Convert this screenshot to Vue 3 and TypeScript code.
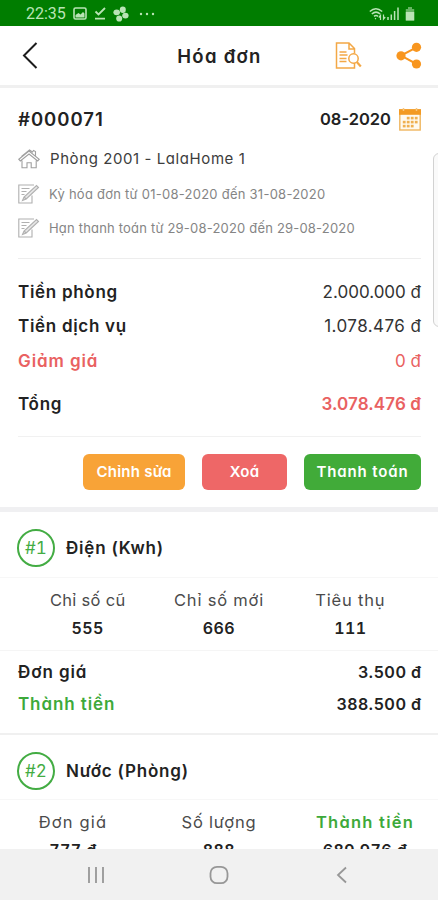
<script setup lang="ts">
interface Line { label: string; value: string; tone?: string; cls: string }
interface Cell { label: string; value: string; tone?: string; cls: string }

const totals: Line[] = [
  { label: 'Tiền phòng', value: '2.000.000 đ', cls: 'room' },
  { label: 'Tiền dịch vụ', value: '1.078.476 đ', cls: 'service' },
  { label: 'Giảm giá', value: '0 đ', tone: 'red', cls: 'discount' },
  { label: 'Tổng', value: '3.078.476 đ', cls: 'total' },
]
const electric: Cell[] = [
  { label: 'Chỉ số cũ', value: '555', cls: 'old' },
  { label: 'Chỉ số mới', value: '666', cls: 'new' },
  { label: 'Tiêu thụ', value: '111', cls: 'used' },
]
const water: Cell[] = [
  { label: 'Đơn giá', value: '777 đ', cls: 'rate' },
  { label: 'Số lượng', value: '888', cls: 'count' },
  { label: 'Thành tiền', value: '689.976 đ', tone: 'green', cls: 'money' },
]
const notes: string[] = [
  'Kỳ hóa đơn từ 01-08-2020 đến 31-08-2020',
  'Hạn thanh toán từ 29-08-2020 đến 29-08-2020',
]
const dots: number[][] = [
  [9, 10], [13, 10], [17, 10],
  [5, 14], [9, 14], [13, 14], [17, 14],
  [5, 18], [9, 18], [13, 18],
]
</script>

<template>
  <div class="phone">
    <div class="status">
      <span class="clock">22:35</span>
      <svg class="s-img" width="14" height="13" viewBox="0 0 14 13"><rect x="1" y="1" width="12" height="11" rx="1.5" fill="none" stroke="currentColor" stroke-width="1.6" /><path d="M2.5 10.5V8l3-2 2 1.5 2.5-2.500 1.500 1.500v4z" fill="currentColor" /></svg>
      <svg class="s-check" width="12" height="13" viewBox="0 0 12 13"><path d="M1.500 4.500l3 3L11 1M1 11.700h10" fill="none" stroke="currentColor" stroke-width="1.800" /></svg>
      <svg class="s-fan" width="16" height="16" viewBox="0 0 16 16" fill="currentColor"><ellipse cx="9.800" cy="3.700" rx="3" ry="3.300" /><ellipse cx="12.400" cy="9.600" rx="3.200" ry="2.900" /><ellipse cx="6.200" cy="12.500" rx="3" ry="3.100" /><ellipse cx="3.700" cy="6.300" rx="3.300" ry="2.900" /><circle cx="8" cy="8" r="1.100" fill="#007d00" /></svg>
      <svg class="s-dots" width="16" height="4" viewBox="0 0 16 4" fill="currentColor"><circle cx="2" cy="2" r="1.200" /><circle cx="8" cy="2" r="1.200" /><circle cx="14" cy="2" r="1.200" /></svg>
      <div class="signals">
        <svg width="17" height="14" viewBox="0 0 17 14" fill="none" stroke="currentColor" stroke-width="1.500"><path d="M.8 4.500q6-5.500 12.400 0M2.800 7q4.200-3.700 8.400 0M5 9.400q2-1.700 4 0" /><path d="M6 11.200l1 .8M11.500 13V8.500l-1.700 2M14.500 7.500V12l1.700-2" stroke-width="1.200" /></svg>
        <svg width="14" height="13" viewBox="0 0 14 13" stroke="currentColor" stroke-width="1.500"><path d="M2 13v-3M5.300 13V7.500M8.600 13V4M12 13V.5" /></svg>
        <svg class="battery" width="10" height="14" viewBox="0 0 10 14"><path d="M3 0h4v2h2.200v11.500H.8V2H3z" fill="currentColor" opacity=".55" /><path d="M.8 5h8.400v8.500H.8z" fill="currentColor" /></svg>
      </div>
    </div>

    <header class="header">
      <svg class="back" width="18" height="28" viewBox="0 0 18 28"><path d="M15.500 2L3 14.500 15.500 27" fill="none" stroke="#1c1c1c" stroke-width="2" /></svg>
      <h1>Hóa đơn</h1>
      <div class="actions">
        <svg width="27" height="28" viewBox="0 0 27 28" fill="none" stroke="#f3a846" stroke-width="1.500">
          <path d="M19.500 21.500V27H1.500V2H14l5.500 5.500v5M14 2v6h5" />
          <path d="M4.500 11h7M4.500 14h8M4.500 17.500h7M4.500 20.500h7" stroke-width="1.300" />
          <circle cx="18.500" cy="17.500" r="4.700" fill="#fff" /><path d="M21.800 21l4 4.500" stroke-width="2.200" />
        </svg>
        <svg class="share" width="26" height="28" viewBox="0 0 26 28" fill="#f8961f"><path d="M20.500 6.300L5 14.600l15.500 8.400" fill="none" stroke="#f8961f" stroke-width="2" /><circle cx="20.500" cy="6.300" r="4.600" /><circle cx="5" cy="14.800" r="4.600" /><circle cx="20.500" cy="23" r="4.600" /></svg>
      </div>
    </header>

    <main class="content">
      <section class="summary">
        <div class="code-row">
          <span class="code">#000071</span>
          <span class="month">08-2020</span>
          <svg width="22" height="23" viewBox="0 0 22 23"><rect x=".8" y="2" width="20.400" height="20" fill="#fffaf0" stroke="#efb65f" stroke-width="1.400" /><path d="M0 1.200h22v5.600H0z" fill="#f39a23" /><path d="M4.500 0v3M17.500 0v3" stroke="#f8c77f" stroke-width="1.500" /><rect v-for="d in dots" :key="d.join('-')" :x="d[0] - 1.200" :y="d[1] - 1.200" width="2.800" height="2.600" fill="#efb050" /></svg>
        </div>
        <div class="info place">
          <svg width="22" height="20" viewBox="0 0 22 20" fill="none" stroke="#a0a0a0" stroke-width="1.100"><path d="M.8 10.200L11 2l10.200 8.200-1.500 1.700L11 5l-8.700 6.900zM4 11.500v7.200h5v-5h4.200v5h5v-7.200M3.500 7.500l8-6.500 3 2 1-1.500 2 1v4" /></svg>
          <span>Phòng 2001 - LalaHome 1</span>
        </div>
        <div v-for="(n, i) in notes" :key="n" class="info note" :class="'note-' + i">
          <svg width="22" height="20" viewBox="0 0 22 20" fill="none" stroke="#b0b0b0" stroke-width="1.100"><path d="M14 11.500V19H.8V1H16M3.500 4.500h8M3.500 7.500h5M3.500 10.500h3" /><path d="M4.500 16.500l1.500-3.500L18.500 1.500l2 2L8.200 15zM6 13l2.200 2" fill="#e6e6e6" /></svg>
          <span>{{ n }}</span>
        </div>
        <div class="rule"></div>
        <div v-for="t in totals" :key="t.label" class="line" :class="[t.cls, t.tone]">
          <span class="k">{{ t.label }}</span><span class="v">{{ t.value }}</span>
        </div>
        <div class="rule second"></div>
        <div class="buttons">
          <button class="edit">Chỉnh sửa</button>
          <button class="remove">Xoá</button>
          <button class="pay">Thanh toán</button>
        </div>
      </section>

      <section class="service-block first">
        <div class="title"><span class="badge">#1</span><h2>Điện (Kwh)</h2></div>
        <div class="cells inset">
          <div v-for="c in electric" :key="c.label" class="cell" :class="c.cls"><span class="label">{{ c.label }}</span><b>{{ c.value }}</b></div>
        </div>
        <div class="price unit"><span>Đơn giá</span><span class="amount">3.500 đ</span></div>
        <div class="price sum"><span class="green">Thành tiền</span><span class="amount">388.500 đ</span></div>
      </section>

      <section class="service-block second-block">
        <div class="title"><span class="badge">#2</span><h2>Nước (Phòng)</h2></div>
        <div class="cells">
          <div v-for="c in water" :key="c.label" class="cell" :class="c.cls"><span class="label" :class="c.tone">{{ c.label }}</span><b>{{ c.value }}</b></div>
        </div>
      </section>
    </main>

    <nav class="nav">
      <svg width="18" height="18" viewBox="0 0 18 18"><path d="M2 1v16M9 1v16M16 1v16" stroke="#979797" stroke-width="1.800" /></svg>
      <svg width="20" height="20" viewBox="0 0 20 20"><rect x="1.500" y="1.800" width="17" height="16.400" rx="6.500" fill="none" stroke="#979797" stroke-width="1.800" /></svg>
      <svg width="18" height="18" viewBox="0 0 18 18"><path d="M13 1.500L5 9l8 7.500" fill="none" stroke="#979797" stroke-width="1.800" /></svg>
    </nav>
    <div class="edge-handle"></div>
  </div>
</template>

<style>
body { margin: 0; overflow: hidden; }
</style>

<style scoped>
* { box-sizing: border-box; }
.phone { position: relative; display: flex; flex-direction: column; width: 438px; height: 900px; overflow: hidden; background: #fff; color: #222; font-family: Inter, "Noto Sans", sans-serif; font-feature-settings: "cv11"; font-size: 16px; white-space: nowrap; }
svg { display: block; flex: none; }
.status { flex: none; height: 26px; display: flex; align-items: center; padding: 1px 23px 0 26px; background: #007d00; color: #b9e4b5; }
.clock { width: 47px; font-family: Roboto, sans-serif; font-size: 16px; line-height: 24px; }
.s-check { margin-left: 7px; }
.s-fan { margin-left: 7px; }
.s-dots { margin-left: 10px; }
.signals { display: flex; align-items: center; margin-left: auto; }
.battery { margin-left: 5px; }
.header { flex: none; height: 62px; display: grid; grid-template-columns: 1fr auto 1fr; align-items: center; padding: 0 16px 1px 21px; border-bottom: 3px solid #f0f0f0; }
h1 { margin: 2px 4px 0 0; font-size: 18.500px; font-weight: 600; line-height: 28px; letter-spacing: 1.300px; }
.actions { display: flex; justify-content: flex-end; gap: 34px; }
.content { flex: 1; min-height: 0; overflow: hidden; }
.summary { padding: 9px 17px 17px 18px; border-bottom: 5px solid #f0f0f2; }
.code-row { height: 44px; display: flex; align-items: center; }
.code { margin-right: auto; font-size: 18.500px; font-weight: 600; letter-spacing: 1px; }
.month { margin-right: 8px; font-size: 16.500px; font-weight: 600; }
.info { height: 35px; display: flex; align-items: center; }
.place { gap: 10px; font-size: 15px; color: #3d3d3d; letter-spacing: .58px; }
.note { gap: 9px; font-size: 13px; color: #858585; letter-spacing: .25px; }
.note-1 { height: 34px; letter-spacing: .19px; }
.rule { height: 1px; margin: 13px 0 15px; background: #ededed; }
.rule.second { margin: 10px 0 17px; background: #f1f1f1; }
.line { height: 35px; display: flex; align-items: center; justify-content: space-between; font-size: 17px; }
.line.service { height: 34px; }
.line.total { height: 44px; margin-top: 4px; }
.k { font-weight: 600; letter-spacing: .7px; }
.discount .k { letter-spacing: .9px; }
.v { color: #333; }
.service .v { margin-right: -.45px; letter-spacing: .45px; }
.red, .red .v, .total .v { color: #e96161; }
.total .v { font-weight: 600; letter-spacing: .1px; }
.buttons { display: flex; justify-content: flex-end; gap: 17px; }
button { height: 36px; padding: 0; border: 0; border-radius: 6px; color: #fff; font: 600 15px/36px Inter, sans-serif; font-feature-settings: "cv11"; letter-spacing: .25px; }
.edit { width: 102px; background: #f8a337; }
.remove { width: 85px; background: #ee6767; }
.pay { width: 117px; background: #41ab39; letter-spacing: .85px; }
.title { height: 66px; display: flex; align-items: center; gap: 11px; padding: 17px 17px 10px; border-bottom: 1px solid #f7f7f7; }
.second-block .title { height: 65px; padding-bottom: 9px; }
.badge { width: 38px; height: 38px; border: 2px solid #43ac43; border-radius: 50%; color: #43ac43; font-size: 17px; line-height: 34px; text-align: center; font-feature-settings: "tnum"; }
h2 { margin: 0; font-size: 17px; font-weight: 600; letter-spacing: .8px; }
.cells { display: grid; grid-template-columns: repeat(3, 1fr); padding: 8px 0; }
.cells.inset { padding: 8px 22px; border-bottom: 1px solid #f5f5f5; }
.cell { display: flex; flex-direction: column; align-items: center; line-height: 28px; }
.label { color: #4b4b4b; font-size: 16.500px; letter-spacing: .8px; }
.old .label { letter-spacing: .3px; }
.rate .label { letter-spacing: 1.150px; }
.money .label { letter-spacing: 1.250px; }
b { font-size: 16px; font-weight: 600; font-feature-settings: "tnum", "cv11"; letter-spacing: .4px; }
.price { height: 34px; display: flex; align-items: center; justify-content: space-between; padding: 0 17px 0 18px; font-size: 17px; font-weight: 600; letter-spacing: .9px; }
.amount { margin-right: -.5px; font-size: 16px; letter-spacing: .5px; }
.price.unit { height: 30px; margin-top: 6px; }
.first { padding-bottom: 12px; border-bottom: 2px solid #f0f0f0; }
.green { color: #3da93a; }
.label.green { color: #3da93a; font-weight: 600; }
.nav { flex: none; height: 51px; display: grid; grid-template-columns: 123px 123px 123px; justify-content: center; align-items: center; justify-items: center; background: #f1f1f1; }
.edge-handle { position: absolute; right: -4px; top: 153px; width: 9px; height: 174px; border: 1px solid #d2d2d2; border-radius: 6px 0 0 6px; background: #fafafa; }
</style>
